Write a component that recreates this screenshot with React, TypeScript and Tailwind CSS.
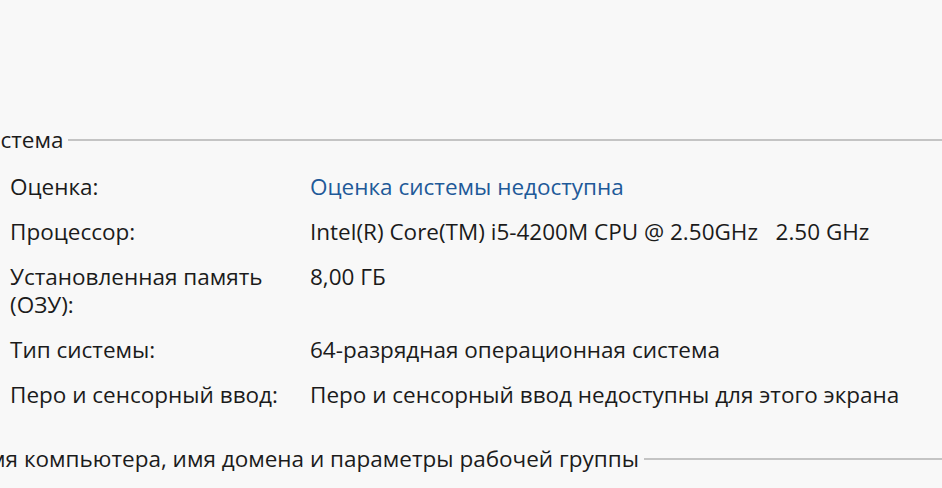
import React from "react";

const rows: { label: React.ReactNode; value: string; link?: boolean }[] = [
  { label: "Оценка:", value: "Оценка системы недоступна", link: true },
  { label: "Процессор:", value: "Intel(R) Core(TM) i5-4200M CPU @ 2.50GHz   2.50 GHz" },
  {
    label: (
      <>
        Установленная память
        <br />
        (ОЗУ):
      </>
    ),
    value: "8,00 ГБ",
  },
  { label: "Тип системы:", value: "64-разрядная операционная система" },
  { label: "Перо и сенсорный ввод:", value: "Перо и сенсорный ввод недоступны для этого экрана" },
];

// Section header with the text clipped at the left edge and a rule to the right
const SectionHeader = ({ title, shift }: { title: string; shift: string }) => (
  <div className="flex items-center overflow-hidden">
    <span className={`whitespace-nowrap ${shift}`}>{title}</span>
    <div className="ml-[5px] h-[2px] flex-1 bg-[#c4c4c4]" />
  </div>
);

export default function App() {
  return (
    <div
      className="w-[942px] h-[488px] overflow-hidden bg-[#f8f8f8] text-[#1b1b1b] text-[22.5px] leading-[28px]"
      style={{ fontFamily: '"Open Sans", "Noto Sans", sans-serif' }}
    >
      <div className="pt-[126px]">
        <SectionHeader title="Система" shift="-ml-[28px]" />

        <div className="mt-[19px] grid grid-cols-[300px_1fr] gap-y-[17px] pl-[10px]">
          {rows.map((r, i) => (
            <React.Fragment key={i}>
              <div>{r.label}</div>
              <div className={`whitespace-pre ${r.link ? "text-[#1f5a99]" : ""}`}>{r.value}</div>
            </React.Fragment>
          ))}
        </div>

        <div className="mt-[36px]">
          <SectionHeader
            title="Имя компьютера, имя домена и параметры рабочей группы"
            shift="-ml-[28px]"
          />
        </div>
      </div>
    </div>
  );
}
